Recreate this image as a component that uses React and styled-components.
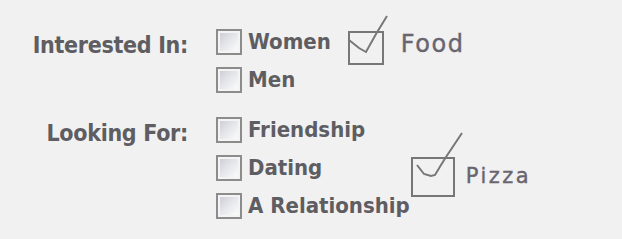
import React from "react";
import styled, { createGlobalStyle } from "styled-components";

const GlobalStyle = createGlobalStyle`
  html, body {
    margin: 0;
    padding: 0;
    background: #f1f1f1;
  }
`;

const Form = styled.div`
  padding-top: 29px;
  font-family: "DejaVu Sans Condensed", "DejaVu Sans", sans-serif;
  font-stretch: condensed;
  color: #5e5d62;
`;

const Section = styled.div`
  display: flex;
  align-items: flex-start;
  margin-bottom: ${(p) => p.$gap || 0}px;
`;

const Label = styled.div`
  width: 188px;
  flex: none;
  text-align: right;
  font-weight: bold;
  font-size: 23px;
  letter-spacing: -0.3px;
  line-height: 26px;
  padding-top: 3px;
  margin-right: 28px;
`;

const Options = styled.div`
  display: flex;
  flex-direction: column;
  gap: 12px;
`;

const Option = styled.label`
  display: flex;
  align-items: center;
  gap: 6px;
  font-weight: bold;
  font-size: 22px;
  line-height: 26px;
  white-space: nowrap;
`;

const Box = styled.span`
  width: 26px;
  height: 26px;
  box-sizing: border-box;
  flex: none;
  border: 2px solid #8c8c8c;
  box-shadow: inset 0 0 0 2px #f4f4f4;
  background: linear-gradient(135deg, #c9cad3 0%, #e4e5ea 45%, #fbfbfb 90%);
`;

const Extra = styled.div`
  display: flex;
  align-items: flex-start;
  margin-top: ${(p) => p.$top}px;
  margin-left: ${(p) => p.$left}px;
`;

const ExtraText = styled.span`
  font-family: "DejaVu Sans", sans-serif;
  font-stretch: normal;
  font-weight: 500;
  font-size: ${(p) => p.$size}px;
  letter-spacing: ${(p) => p.$spacing}px;
  line-height: 1;
  color: #69656f;
  -webkit-text-stroke: 0.4px #69656f;
  margin-top: ${(p) => p.$top}px;
  margin-left: ${(p) => p.$left}px;
`;

function Tick({ w, h, rect, points }) {
  return (
    <svg width={w} height={h} viewBox={`0 0 ${w} ${h}`} style={{ flex: "none" }}>
      <rect
        x={rect[0]}
        y={rect[1]}
        width={rect[2]}
        height={rect[3]}
        fill="none"
        stroke="#777"
        strokeWidth="2"
      />
      <polyline points={points} fill="none" stroke="#777" strokeWidth="2" />
    </svg>
  );
}

function Check({ children }) {
  return (
    <Option>
      <Box />
      {children}
    </Option>
  );
}

export default function App() {
  return (
    <>
      <GlobalStyle />
      <Form>
        <Section $gap={24}>
          <Label>Interested In:</Label>
          <Options>
            <Check>Women</Check>
            <Check>Men</Check>
          </Options>
          <Extra $top={-14} $left={17}>
            <Tick w={41} h={50} rect={[1, 17, 34, 32]} points="1,25 11,33 18,37 28,19 39,1" />
            <ExtraText $size={24} $spacing={1.5} $top={17} $left={12}>
              Food
            </ExtraText>
          </Extra>
        </Section>
        <Section>
          <Label>Looking For:</Label>
          <Options>
            <Check>Friendship</Check>
            <Check>Dating</Check>
            <Check>A Relationship</Check>
          </Options>
          <Extra $top={15} $left={1}>
            <Tick w={53} h={66} rect={[1, 26, 42, 38]} points="6,33 13,42 20,44 24,43 30,33 35,25 51,1" />
            <ExtraText $size={21} $spacing={2.5} $top={34} $left={2}>
              Pizza
            </ExtraText>
          </Extra>
        </Section>
      </Form>
    </>
  );
}
